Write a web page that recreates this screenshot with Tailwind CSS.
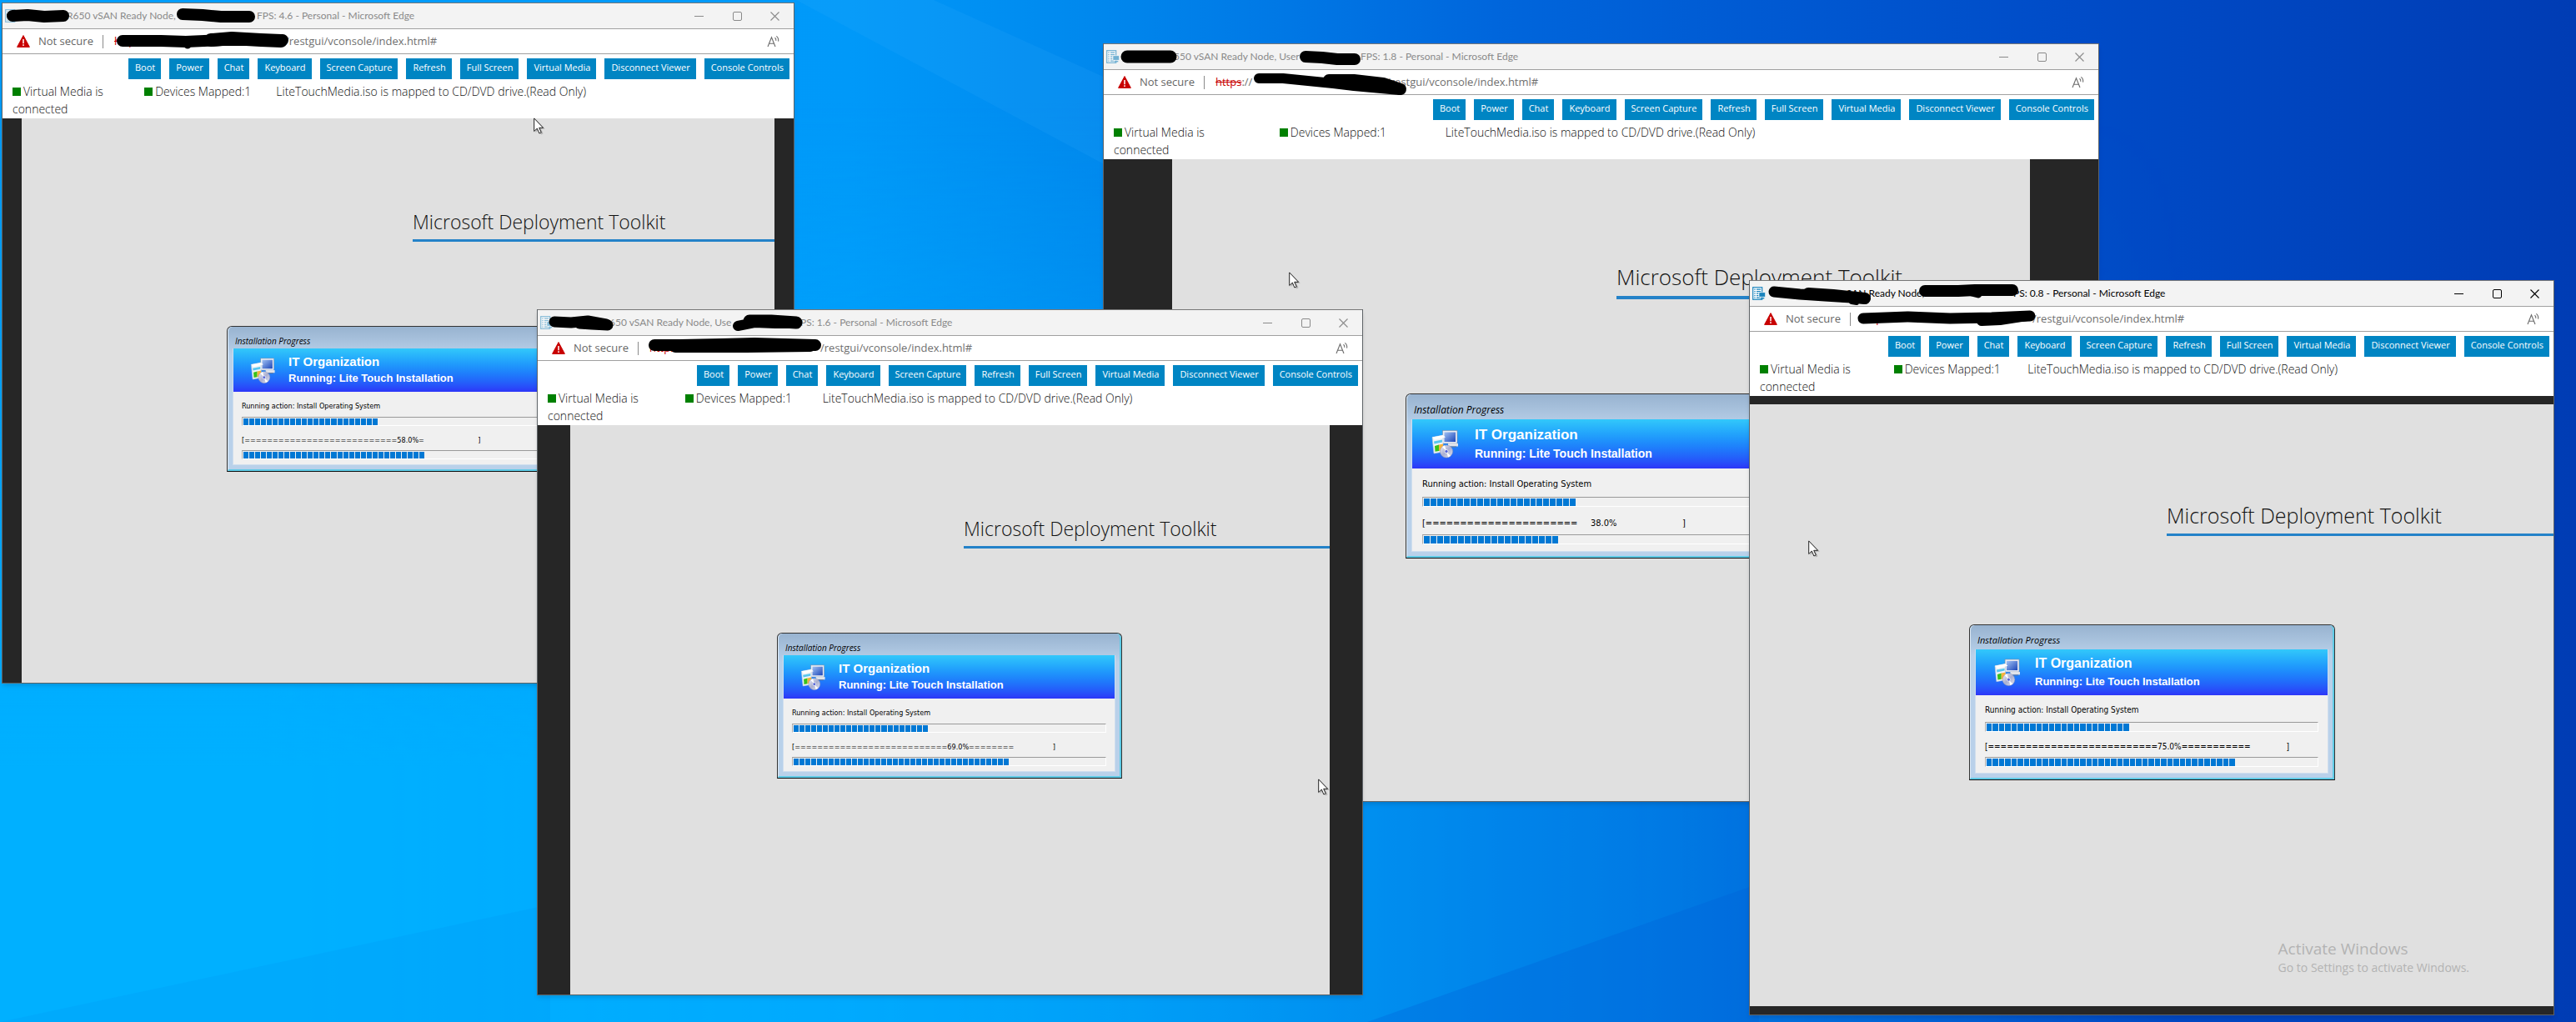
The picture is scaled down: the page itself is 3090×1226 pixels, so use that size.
<!DOCTYPE html>
<html lang="en">
<head>
<meta charset="utf-8">
<title>Virtual consoles</title>
<script src="https://cdn.jsdelivr.net/npm/@tailwindcss/browser@4"></script>
</head>
<body class="bg-[#0090f0] font-['Open_Sans',sans-serif]">

<!-- shared icons -->
<svg class="absolute size-0" aria-hidden="true">
  <defs>
    <linearGradient id="lcd" x1="0" y1="0" x2="1" y2="1"><stop offset="0" stop-color="#9fc0f4"/><stop offset="1" stop-color="#1d46b8"/></linearGradient>
    <linearGradient id="disc" x1="0" y1="0" x2="1" y2="1"><stop offset="0" stop-color="#f4f4fa"/><stop offset=".5" stop-color="#a9aed0"/><stop offset="1" stop-color="#e6e8f2"/></linearGradient>
  </defs>
  <symbol id="i-server" viewBox="0 0 16 16">
    <rect x=".7" y=".7" width="11" height="14.6" fill="#fff" stroke="#1b84bd" stroke-width="1.2"/>
    <path d="M2.3 3.2h1.4M5 3.2h5.200M2.300 5.700h1.400M5 5.700h5.200M2.300 8.200h1.400M5 8.200h2.500M2.300 10.700h1.400M5 10.700h2.500M2.300 13.100h1.400M5 13.100h4" stroke="#1b84bd" stroke-width="1.200"/>
    <rect x="8" y="6.800" width="7.600" height="5.400" fill="#1b84bd" stroke="#fff" stroke-width=".6"/>
    <path d="M9.500 13.700h4.800" stroke="#1b84bd" stroke-width="1.400"/>
  </symbol>
  <symbol id="i-warn" viewBox="0 0 16 15">
    <path d="M8 .6 15.400 14.400H.6Z" fill="#c80000" stroke="#c80000" stroke-width="1" stroke-linejoin="round"/>
    <path d="M8 5v5.200M8 11.300v1.600" stroke="#fff" stroke-width="1.500"/>
  </symbol>
  <symbol id="i-read" viewBox="0 0 16 16">
    <path d="M1 14 5.500 2.800 10 14M2.600 10.200h5.800M9.500 3.300q1.700 1.300 1.300 3.500M11.300 1.400q3 2.200 2.300 6.200" fill="none" stroke="#6b6b6b" stroke-width="1.100"/>
  </symbol>
  <symbol id="i-setup" viewBox="0 0 32 34">
    <rect x="13.500" y="1" width="17.500" height="15.500" fill="#e9edf4" stroke="#7d8aa6" stroke-width=".6"/>
    <rect x="15.500" y="3" width="13.500" height="11.500" fill="url(#lcd)"/>
    <path d="M20 16.500h12v3.500H20z" fill="#dfe3ea"/>
    <path d="M23 20.500h7" stroke="#6a7690" stroke-width="1"/>
    <path d="M1 9 14 6.500v20L3 28.500Z" fill="#eef3f8" stroke="#b8c6d8" stroke-width=".6"/>
    <path d="M1 9 14 6.500 17 9 4 12Z" fill="#fff"/>
    <path d="M3 14l10-2v3L3.500 17Z" fill="#58c6ee"/>
    <path d="M4 19.500 9 18v7.500l-4.500.8Z" fill="#39c11c"/><path d="M9 18l5-1v8l-5 .5Z" fill="#f7b23a"/>
    <circle cx="18" cy="26" r="7.600" fill="url(#disc)" stroke="#8d93b3" stroke-width=".5"/>
    <path d="M18 26 13 20.500l3-1.800Z" fill="#fff"/><path d="M18 26 23 31.500l-3 1.500Z" fill="#fff"/>
    <circle cx="18" cy="26" r="2.100" fill="#5766d8" stroke="#e8eaf4"/>
  </symbol>
  <symbol id="i-cursor" viewBox="0 0 14 21">
    <path d="M2.500 2v16l3.700-3.400L9 20.500l2.600-1.200-2.700-5.500h4.900Z" fill="#000" opacity=".2"/>
    <path d="M.7.9v15.600l3.600-3.400 2.600 5.900 2.400-1.100-2.600-5.600h4.900Z" fill="#fff" stroke="#222" stroke-width="1"/>
  </symbol>
</svg>

<main id="desktop" class="relative min-h-screen overflow-hidden">
  <svg class="absolute inset-0 size-full" viewBox="0 0 3090 1226" preserveAspectRatio="none" aria-hidden="true">
    <defs>
      <linearGradient id="sky" x1="0" y1="0" x2="1" y2="0">
        <stop offset="0" stop-color="#009efc"/><stop offset=".33" stop-color="#0099f9"/><stop offset=".42" stop-color="#0089ee"/><stop offset=".58" stop-color="#0066dc"/><stop offset=".8" stop-color="#004cc8"/><stop offset="1" stop-color="#003cb4"/>
      </linearGradient>
      <linearGradient id="low" x1="0" y1="0" x2="0" y2="1"><stop offset=".1" stop-color="#00b0ff" stop-opacity="0"/><stop offset=".75" stop-color="#00b0ff"/></linearGradient>
      <linearGradient id="lowmask" x1="0" y1="0" x2="1" y2="0"><stop offset=".1" stop-color="#fff"/><stop offset=".65" stop-color="#555"/><stop offset=".85" stop-color="#000"/></linearGradient>
      <mask id="fade"><rect width="3090" height="1226" fill="url(#lowmask)"/></mask>
    </defs>
    <rect width="3090" height="1226" fill="url(#sky)"/>
    <rect width="3090" height="1226" fill="url(#low)" mask="url(#fade)"/>
    <path d="M955 0H1120L1330 95V200Z" fill="#3fb4ff" opacity=".12"/>
    <path d="M0 1226 660 1085V1226Z" fill="#0090f0" opacity=".18"/>
    <path d="M1640 1226 2110 1060V1226Z" fill="#0060d8" opacity=".3"/>
  </svg>
</main>

<script>
const BUTTONS = ['Boot','Power','Chat','Keyboard','Screen Capture','Refresh','Full Screen','Virtual Media','Disconnect Viewer','Console Controls'];

// classes for the three zoom levels at which a console draws its remote screen
const SIZES = {
  s: { pad:'pt-[108px]', h1:'text-[23px] leading-8', line:'mt-[5px] h-[3px]', gap:'mt-[101px]', dlg:'w-[414px]',
       cap:'h-[26px] text-[10px] pl-2', head:'h-[52px] pl-5', icon:'w-[30px] h-[31px]', txt:'ml-4', t1:'text-[15px] leading-5', t2:'text-[13px] leading-5',
       body:'px-2.5 pt-2.5 pb-1.5 text-[9px] leading-[14px]', bar:'h-[11px]', g1:'mt-1.5', g2:'mt-2.5', g3:'mt-[5px]' },
  m: { pad:'pt-[116px]', h1:'text-[25px] leading-[34px]', line:'mt-[5px] h-[3px]', gap:'mt-[106px]', dlg:'w-[439px]',
       cap:'h-[29px] text-[11px] pl-2', head:'h-[55px] pl-[22px]', icon:'w-[31px] h-[33px]', txt:'ml-[18px]', t1:'text-base leading-[22px]', t2:'text-[13px] leading-[22px]',
       body:'px-[11px] pt-2.5 pb-[7px] text-[10px] leading-4', bar:'h-3', g1:'mt-1.5', g2:'mt-2.5', g3:'mt-1' },
  l: { pad:'pt-[123px]', h1:'text-[26px] leading-9', line:'mt-[5px] h-1', gap:'mt-[113px]', dlg:'w-[468px]',
       cap:'h-[30px] text-[12px] pl-2', head:'h-[59px] pl-[23px]', icon:'w-8 h-[35px]', txt:'ml-5', t1:'text-[17px] leading-[23px]', t2:'text-[14px] leading-[23px]',
       body:'px-3 pt-[11px] pb-2 text-[11px] leading-4', bar:'h-3', g1:'mt-[7px]', g2:'mt-3', g3:'mt-[5px]' },
};

const WINDOWS = [
  { box:'left-[2px] top-[3px] w-[951px] h-[817px]', size:'s', side:'px-[23px]', h1x:'ml-[469px]', dx:'ml-[246px]', tone:'text-[#8a8a8a]',
    fav:'opacity-50', tx:'ml-[58px] w-[228px]', name:'R650 vSAN Ready Node,', fps:'FPS: 4.6', done:58, blocks:31, log:'['+'='.repeat(27)+'58.0%='+' '.repeat(25)+']',
    cur:'left-[637px] top-[138px]',
    ink:[['M12 16 30 15 50 17 73 16',14],['M216 14 240 15 262 17 296 17',14],['M144 46 190 46 220 47 265 45 336 45',14],['M250 45 275 43 310 45 334 46',16],['M219 48 222 51',9]] },
  { box:'left-[1323px] top-[52px] w-[1195px] h-[910px]', size:'l', side:'px-[82px]', h1x:'ml-[533px]', dx:'ml-[280px]', tone:'text-[#8a8a8a]',
    fav:'opacity-60', tx:'ml-[65px] w-[224px]', name:'550 vSAN Ready Node, User', fps:'FPS: 1.8', done:38, blocks:20, log:'['+'='.repeat(22)+'     38.0%'+' '.repeat(25)+']',
    cur:'left-[222px] top-[274px]',
    ink:[['M28 16 50 16 80 16',15],['M242 16 262 17 280 19 301 19',14],['M186 42 215 42 245 45 275 48 300 51 355 56',12],['M270 44 300 44 335 48 356 55',14]] },
  { box:'left-[644px] top-[371px] w-[991px] h-[823px]', size:'s', side:'px-[39px]', h1x:'ml-[472px]', dx:'ml-[248px]', tone:'text-[#8a8a8a]',
    fav:'opacity-50', tx:'ml-[67px] w-[229px]', name:'650 vSAN Ready Node, Use', fps:'PS: 1.6', done:69, blocks:37, log:'['+'='.repeat(27)+'69.0%'+'='.repeat(8)+' '.repeat(18)+']',
    cur:'left-[936px] top-[563px]',
    ink:[['M20 15 40 16 60 14 82 18',13],['M50 17 65 18 84 19',13],['M254 14 280 14 310 16',15],['M240 20 260 16 285 17 310 17',12],['M140 43 170 43 220 42 260 41 333 43',14],['M165 46 250 46 327 45',12]] },
  { box:'left-[2098px] top-[336px] w-[966px] h-[882px]', size:'m', side:'py-2.5', h1x:'ml-[500px]', dx:'ml-[263px]', tone:'text-black',
    fav:'', tx:'ml-[67px] w-[230px]', name:'650 vSAN Ready Node,', fps:'PS: 0.8', done:75, blocks:40, log:'['+'='.repeat(27)+'75.0%'+'='.repeat(11)+' '.repeat(15)+']',
    cur:'left-[70px] top-[312px]',
    ink:[['M29 14 60 17 90 19 138 22',13],['M70 16 100 18 138 22',14],['M122 26 128 27',6],['M210 13 250 13 270 12 315 12',14],['M266 15 274 17',9],['M136 46 190 44 240 46 290 45 336 43',13],['M278 49 300 48 332 43',12]] },
];

const blocks = n => '<span class="flex-1 bg-[#0078d4]"></span>'.repeat(n);
const bar = (s, pct, n, label, gap) => `
  <div role="progressbar" aria-label="${label}" aria-valuenow="${pct}" class="${gap} ${s.bar} border-t border-l border-t-[#9a9a9a] border-l-[#b0b0b0] border-r border-b border-r-white border-b-white pt-px pl-px">
    <div class="flex h-full gap-px" style="width:${pct}%">${blocks(n)}</div>
  </div>`;

function consoleWindow(w) {
  const s = SIZES[w.size];
  return `
<section class="absolute ${w.box} flex flex-col overflow-hidden border-x border-b border-[#5f6468] bg-white shadow-md" aria-label="Console ${w.fps}">
  <header class="flex h-8 shrink-0 items-center border-t border-b border-t-[#777] border-b-[#a0a0a0] bg-[#f3f3f3] font-[Lato,sans-serif] text-xs ${w.tone}">
    <svg class="ml-[3px] size-4 shrink-0 ${w.fav}"><use href="#i-server"/></svg>
    <span class="${w.tx} shrink-0 whitespace-nowrap">${w.name}</span>
    <span class="whitespace-nowrap">${w.fps} - Personal - Microsoft Edge</span>
    <div class="ml-auto flex">
      <button aria-label="Minimize" class="flex h-7 w-[45px] items-center justify-center"><svg class="size-[11px]" viewBox="0 0 11 11"><path d="M0 5.500h11" stroke="currentColor"/></svg></button>
      <button aria-label="Maximize" class="flex h-7 w-[46px] items-center justify-center"><svg class="size-[11px]" viewBox="0 0 11 11"><rect x=".5" y=".5" width="10" height="10" rx="1.500" fill="none" stroke="currentColor"/></svg></button>
      <button aria-label="Close" class="flex h-7 w-[45px] items-center justify-center"><svg class="size-[11px]" viewBox="0 0 11 11"><path d="M.5.5l10 10M10.500.5l-10 10" stroke="currentColor" stroke-width="1.100"/></svg></button>
    </div>
  </header>
  <div class="flex h-[30px] shrink-0 items-center border-b border-[#a0a0a0] text-[13px] text-[#666]">
    <svg class="ml-[17px] h-[15px] w-4"><use href="#i-warn"/></svg>
    <span class="ml-2.5 w-[77px]">Not secure</span>
    <span class="h-4 w-px bg-[#8a8a8a]"></span>
    <a href="#" class="ml-[13px] flex whitespace-nowrap text-[#707070]"><span class="w-[205px]"><s class="text-[#c80000]">https</s>://</span><span>/restgui/vconsole/index.html#</span></a>
    <button aria-label="Read aloud" class="mr-4 ml-auto"><svg class="size-4"><use href="#i-read"/></svg></button>
  </div>
  <nav class="flex shrink-0 justify-end gap-2.5 pt-[5px] pr-[5px]">
    ${BUTTONS.map(b => `<button class="h-[25px] bg-[#0085c3] pr-[7px] pb-0.5 pl-2 text-[11px] whitespace-nowrap text-white">${b}</button>`).join('')}
  </nav>
  <div class="mt-1 grid shrink-0 grid-cols-6 pb-px text-[14px] leading-[21px] font-light text-[#111]">
    <p class="pl-3 pr-6"><span class="mr-[3px] inline-block size-2.5 bg-[#008000]"></span>Virtual Media is connected</p>
    <p class="pl-3 whitespace-nowrap"><span class="mr-[3px] inline-block size-2.5 bg-[#008000]"></span>Devices Mapped:1</p>
    <p class="col-span-4 pl-3 whitespace-nowrap">LiteTouchMedia.iso is mapped to CD/DVD drive.(Read Only)</p>
  </div>
  <div class="flex min-h-0 flex-1 bg-[#262626] ${w.side}">
    <div class="min-w-0 flex-1 bg-[#e0e0e0] ${s.pad}">
      <div class="${w.h1x}">
        <h1 class="${s.h1} font-light whitespace-nowrap text-[#111]">Microsoft Deployment Toolkit</h1>
        <div class="${s.line} bg-[#2482c8]"></div>
      </div>
      <div class="${s.gap} ${w.dx} ${s.dlg} rounded-t-md border border-[#333] border-b-[#111] bg-[#b9d1ea]">
        <div class="rounded-t-md border-r-2 border-b-2 border-[#5fcbe6] border-l border-l-[#dce9f5] bg-linear-to-b from-[#98b3d0] to-[#b9d1ea] to-20%">
          <h2 class="${s.cap} flex items-center pt-2 text-black italic">Installation Progress</h2>
          <div class="mx-[5px] mb-[5px] border-x border-b border-[#cfdeee] bg-[#f0f0f0]">
            <div class="${s.head} flex items-center bg-linear-to-b from-[#33c8fa] to-[#2d35f8] font-['Liberation_Sans',sans-serif] font-bold text-white">
              <svg class="${s.icon} shrink-0"><use href="#i-setup"/></svg>
              <div class="${s.txt}"><p class="${s.t1}">IT Organization</p><p class="${s.t2}">Running: Lite Touch Installation</p></div>
            </div>
            <div class="${s.body} font-['DejaVu_Sans_Condensed','DejaVu_Sans',sans-serif] text-black">
              <p>Running action: Install Operating System</p>
              ${bar(s, 43, 23, 'Overall progress', s.g1)}
              <p class="${s.g2} whitespace-pre">${w.log}</p>
              ${bar(s, w.done, w.blocks, 'Step progress', s.g3)}
            </div>
          </div>
        </div>
      </div>
    </div>
  </div>
  <svg class="pointer-events-none absolute top-0 left-0 h-16 w-[400px]" viewBox="0 0 400 64" fill="none" stroke="#000" stroke-linecap="round" stroke-linejoin="round" aria-hidden="true">
    ${w.ink.map(([d, t]) => `<path d="${d}" stroke-width="${t}"/>`).join('')}
  </svg>
  <svg class="absolute ${w.cur} h-[21px] w-3.5"><use href="#i-cursor"/></svg>
</section>`;
}

document.getElementById('desktop').insertAdjacentHTML('beforeend', WINDOWS.map(consoleWindow).join('') + `
<aside class="absolute right-[128px] bottom-[54px] text-[#b3b3b3]">
  <p class="text-[19px] leading-6">Activate Windows</p>
  <p class="text-[14px] leading-[22px]">Go to Settings to activate Windows.</p>
</aside>`);
</script>
</body>
</html>
